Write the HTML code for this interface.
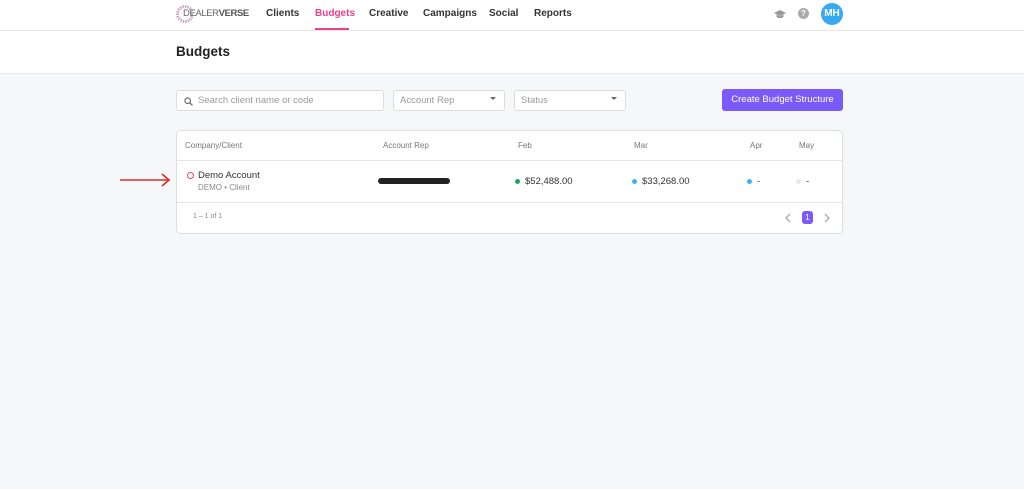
<!DOCTYPE html>
<html><head><style>
*{box-sizing:border-box;margin:0;padding:0}
body{width:1024px;height:489px;background:#f6f7f9;font-family:"Liberation Sans",sans-serif;position:relative;overflow:hidden;color:#333}
.top{position:absolute;left:0;top:0;width:1024px;height:31px;background:#fff;border-bottom:1px solid #e6e6e6}
.nav{position:absolute;top:8px;font-size:10px;font-weight:bold;color:#333}
.hdr{position:absolute;left:0;top:31px;width:1024px;height:43px;background:#fff;border-bottom:1px solid #e8e8e8}
.abs{position:absolute}
.inp{position:absolute;top:90px;height:21px;background:#fff;border:1px solid #dcdcdc;border-radius:3px;font-size:9.5px;color:#999;padding:4px 6px}
.card{position:absolute;left:176px;top:130px;width:667px;height:104px;background:#fff;border:1px solid #dedede;border-radius:5px}
.th{position:absolute;top:141px;font-size:8px;color:#777}
.td{position:absolute;font-size:9.5px;color:#333}
.dot{position:absolute;width:5px;height:5px;border-radius:50%}
</style></head><body>
<div class="top">
 <svg class="abs" style="left:175px;top:4px" width="18" height="20" viewBox="0 0 18 20"><circle cx="10" cy="10" r="7.5" fill="none" stroke="#c9a3c8" stroke-width="3" stroke-dasharray="1.5 1"/></svg>
 <div class="abs" style="left:183px;top:8px;font-size:9.5px;color:#666;letter-spacing:-0.4px">DEALER<b style="color:#555">VERSE</b></div>
 <div class="nav" style="left:266px">Clients</div>
 <div class="nav" style="left:315px;color:#e8428c">Budgets</div>
 <div class="abs" style="left:315px;top:28px;width:34px;height:2px;background:#e8428c"></div>
 <div class="nav" style="left:369px">Creative</div>
 <div class="nav" style="left:423px">Campaigns</div>
 <div class="nav" style="left:489px">Social</div>
 <div class="nav" style="left:534px">Reports</div>
 <svg class="abs" style="left:774px;top:9px" width="12" height="10" viewBox="0 0 12 10"><path d="M6 1L0 4l6 3 6-3z" fill="#999"/><path d="M2.5 5.5v2.5c2 1.5 5 1.5 7 0V5.5L6 7.2z" fill="#999"/></svg>
 <div class="abs" style="left:798px;top:8px;width:11px;height:11px;border-radius:50%;background:#aaa;color:#fff;font-size:8px;font-weight:bold;text-align:center;line-height:11px">?</div>
 <div class="abs" style="left:821px;top:3px;width:22px;height:22px;border-radius:50%;background:#36a9f2;color:#fff;font-size:10px;font-weight:bold;text-align:center;line-height:22px">MH</div>
</div>
<div class="hdr"><div class="abs" style="left:176px;top:13px;font-size:13.5px;font-weight:bold;color:#222">Budgets</div></div>
<div class="inp" style="left:176px;width:208px;padding-left:21px">Search client name or code
 <svg class="abs" style="left:7px;top:6px" width="9" height="9" viewBox="0 0 9 9"><circle cx="3.7" cy="3.7" r="2.8" fill="none" stroke="#666" stroke-width="1.1"/><path d="M5.8 5.8L8.5 8.5" stroke="#666" stroke-width="1.2"/></svg></div>
<div class="inp" style="left:393px;width:112px">Account Rep<span class="abs" style="right:8px;top:6px;width:0;height:0;border-left:3px solid transparent;border-right:3px solid transparent;border-top:3px solid #666"></span></div>
<div class="inp" style="left:514px;width:112px">Status<span class="abs" style="right:8px;top:6px;width:0;height:0;border-left:3px solid transparent;border-right:3px solid transparent;border-top:3px solid #666"></span></div>
<div class="abs" style="left:722px;top:89px;width:121px;height:22px;background:#7a5af8;border-radius:3px;color:#fff;font-size:9.5px;text-align:center;line-height:22px">Create Budget Structure</div>
<div class="card"></div>
<div class="abs" style="left:177px;top:160px;width:665px;height:1px;background:#e6e6e6"></div>
<div class="abs" style="left:177px;top:202px;width:665px;height:1px;background:#e6e6e6"></div>
<div class="th" style="left:185px">Company/Client</div>
<div class="th" style="left:383px">Account Rep</div>
<div class="th" style="left:518px">Feb</div>
<div class="th" style="left:634px">Mar</div>
<div class="th" style="left:750px">Apr</div>
<div class="th" style="left:799px">May</div>
<div class="abs" style="left:187px;top:172px;width:7px;height:7px;border:1px solid #e8428c;border-radius:50%"></div>
<div class="td" style="left:198px;top:170px">Demo Account</div>
<div class="td" style="left:198px;top:183px;font-size:8px;color:#888">DEMO • Client</div>
<div class="abs" style="left:378px;top:178px;width:72px;height:6px;background:#222;border-radius:3px"></div>
<div class="dot" style="left:515px;top:179px;background:#1aa85a"></div>
<div class="td" style="left:525px;top:176px">$52,488.00</div>
<div class="dot" style="left:632px;top:179px;background:#36b7f2"></div>
<div class="td" style="left:642px;top:176px">$33,268.00</div>
<div class="dot" style="left:747px;top:179px;background:#36b7f2"></div>
<div class="td" style="left:757px;top:176px">-</div>
<div class="dot" style="left:796px;top:179px;background:#e8e8e8"></div>
<div class="td" style="left:806px;top:176px">-</div>
<div class="td" style="left:193px;top:213px;font-size:7px;color:#888">1 – 1 of 1</div>
<svg class="abs" style="left:784px;top:213px" width="8" height="10" viewBox="0 0 8 10"><path d="M6 1L2 5l4 4" fill="none" stroke="#aaa" stroke-width="1.3"/></svg>
<div class="abs" style="left:802px;top:211px;width:11px;height:13px;background:#7a5af8;border-radius:3px;color:#fff;font-size:8px;text-align:center;line-height:13px">1</div>
<svg class="abs" style="left:823px;top:213px" width="8" height="10" viewBox="0 0 8 10"><path d="M2 1l4 4-4 4" fill="none" stroke="#aaa" stroke-width="1.3"/></svg>
<svg class="abs" style="left:118px;top:172px" width="56" height="16" viewBox="0 0 56 16"><path d="M2 8H52M44 2l7 6-7 6" fill="none" stroke="#e02a2a" stroke-width="1.6"/></svg>
</body></html>
